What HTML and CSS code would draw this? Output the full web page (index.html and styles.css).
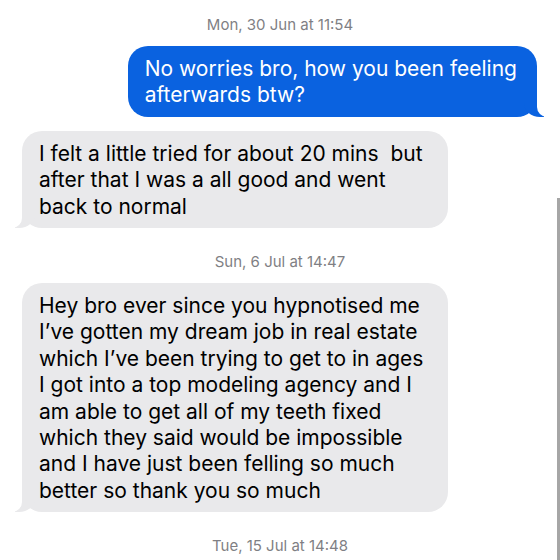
FILE: index.html
```html
<!DOCTYPE html>
<html lang="en">
<head>
    <meta charset="UTF-8">
    <meta name="viewport" content="width=device-width, initial-scale=1.0">
    <title>Messages</title>
    <link rel="stylesheet" href="styles.css">
</head>
<body>
    <div class="thread">
        <p class="stamp first">Mon, 30 Jun at 11:54</p>
        <div class="bubble sent">No worries bro, how you been feeling<br>afterwards btw?</div>
        <div class="bubble received">I felt a little tried for about 20 mins&nbsp; but<br>after that I was a all good and went<br>back to normal</div>

        <p class="stamp">Sun, 6 Jul at 14:47</p>
        <div class="bubble received">Hey bro ever since you hypnotised me<br>I’ve gotten my dream job in real estate<br>which I’ve been trying to get to in ages<br>I got into a top modeling agency and I<br>am able to get all of my teeth fixed<br>which they said would be impossible<br>and I have just been felling so much<br>better so thank you so much</div>

        <p class="stamp">Tue, 15 Jul at 14:48</p>
    </div>
    <!-- scroll indicator -->
    <div class="scroll-bar"></div>
</body>
</html>
```

FILE: styles.css
```css
body {
    margin: 0;
    background: #fff;
    font-family: 'Inter', 'Noto Sans', sans-serif;
    color: #000;
    overflow: hidden;
}
.thread {
    display: flex;
    flex-direction: column;
}
.stamp {
    margin: 25px 0 12px;
    text-align: center;
    font-size: 15px;
    line-height: 18px;
    color: #7f7f84;
}
.stamp.first {
    margin-top: 16px;
}
.bubble {
    position: relative;
    padding: 10px 20px 8px 17px;
    border-radius: 20px;
    font-size: 21px;
    line-height: 26.4px;
    white-space: nowrap;
}
.bubble::before,
.bubble::after {
    content: "";
    position: absolute;
    bottom: 0;
    height: 25px;
}
.sent {
    align-self: flex-end;
    margin-right: 23px;
    background: #0a62e0;
    color: #fff;
}
.sent::before {
    right: -7px;
    width: 20px;
    background: #0a62e0;
    border-bottom-left-radius: 16px 14px;
}
.sent::after {
    right: -26px;
    width: 26px;
    background: #fff;
    border-bottom-left-radius: 10px;
}
.received {
    align-self: flex-start;
    margin-left: 22px;
    margin-top: 14px;
    padding-right: 25px;
    background: #e9e9eb;
}
.stamp + .received {
    margin-top: 0;
}
.received::before {
    left: -7px;
    width: 20px;
    background: #e9e9eb;
    border-bottom-right-radius: 16px 14px;
}
.received::after {
    left: -26px;
    width: 26px;
    background: #fff;
    border-bottom-right-radius: 10px;
}
.scroll-bar {
    position: absolute;
    top: 198px;
    right: 0;
    bottom: 0;
    width: 3px;
    background: #a6a6a6;
    z-index: 2;
}
```
